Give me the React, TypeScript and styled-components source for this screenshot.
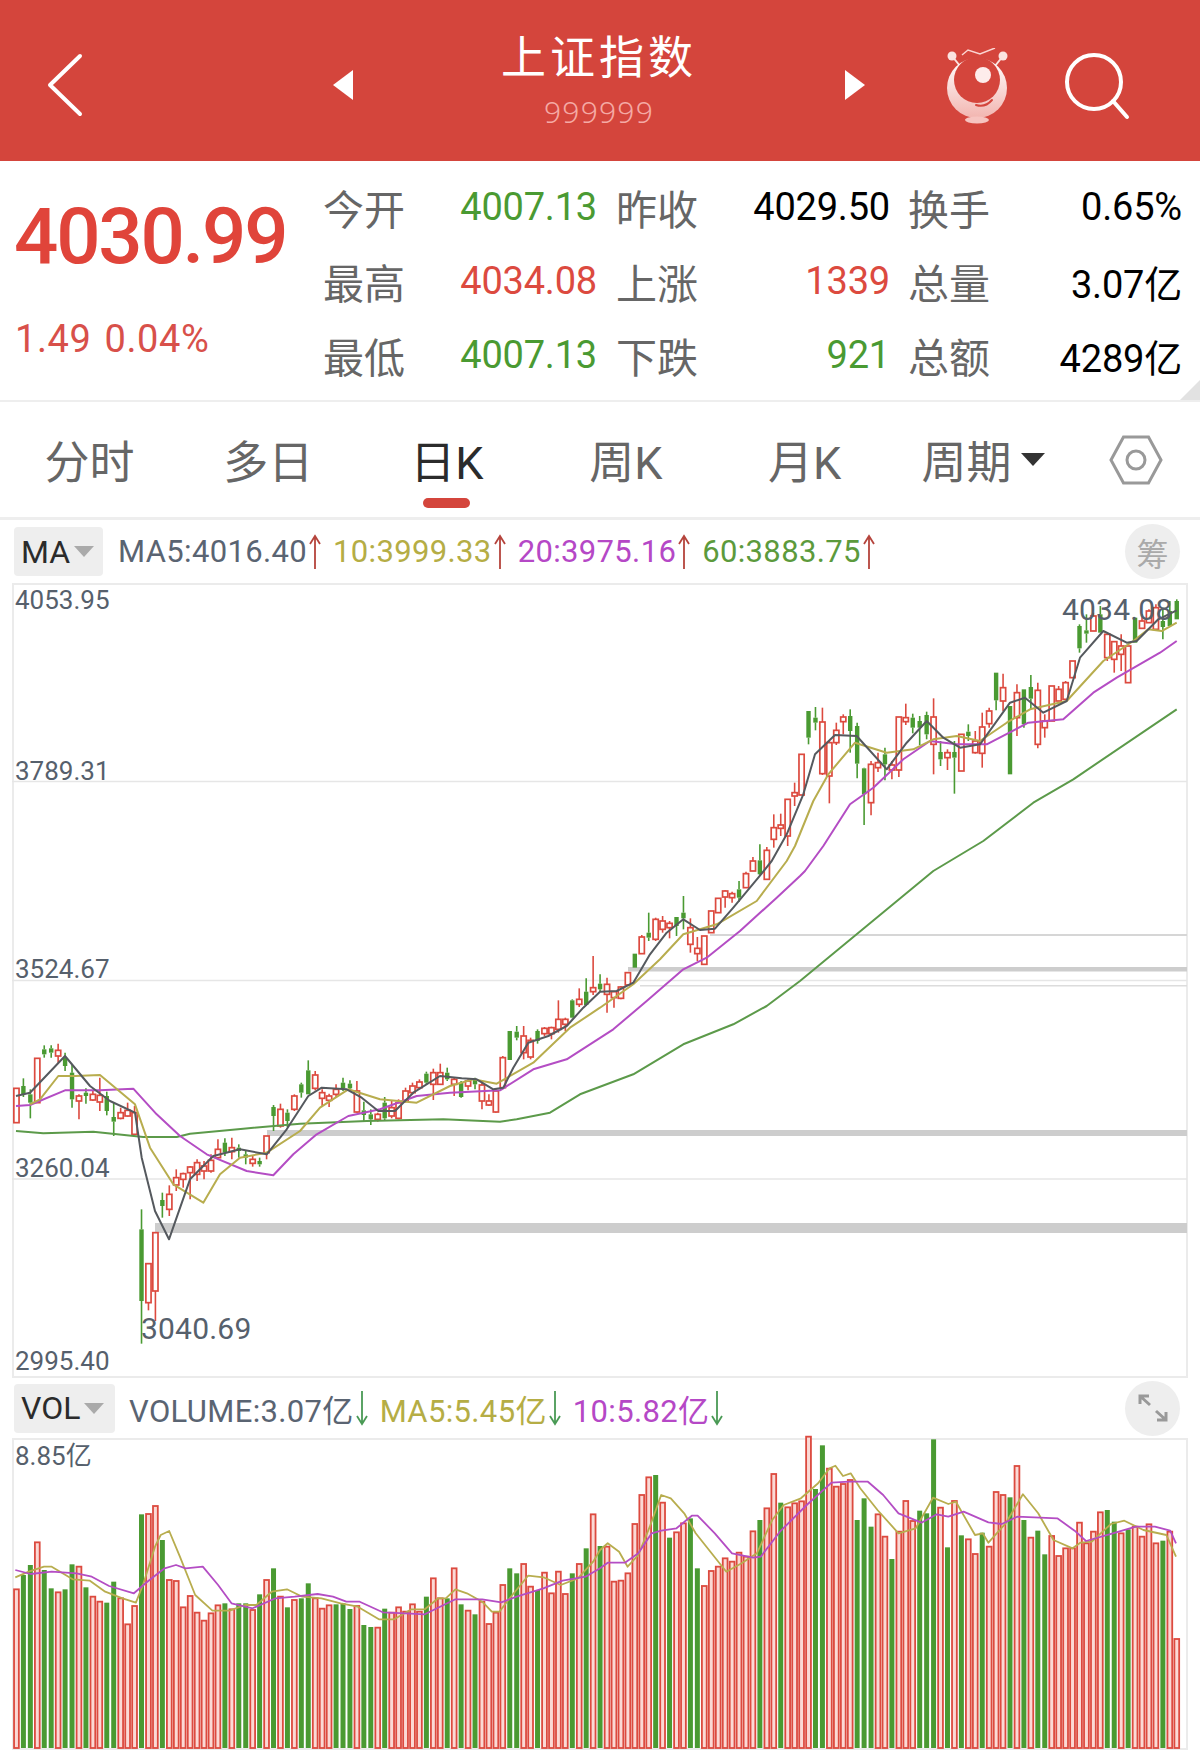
import React from "react";
import styled, { createGlobalStyle } from "styled-components";

const RED = "#d4453c";
const UP = "#dc4a3f";
const DOWN = "#4a9a32";
const SANS = `Roboto, "Noto Sans CJK SC", sans-serif`;

const GlobalStyle = createGlobalStyle`
  html, body { margin: 0; padding: 0; background: #fff; }
  body { font-family: ${SANS}; width: 1200px; }
`;

type Pt = [number, number];

// points read off the chart, given in crop pixels
const crop = (ox: number, oy: number, pts: Pt[], sx = 3): Pt[] =>
  pts.map(([x, y]) => [ox + x / sx, oy + y / 3] as Pt);
const toPath = (pts: Pt[]) => pts.map(([x, y]) => `${x.toFixed(1)},${y.toFixed(1)}`).join(" ");

const colors =
  "RGGRGGRGGRGRRGGRRRGRRGRRRRRRRRGRGGRGRGRGRGGRRRGGGRGGRGRRRRRGRRGRGRGRRRRGGRRGRRRRGRGRGRRRRRRRGRGRRGGRRRRRRRRGRRGRRRRGGRRRRGGGRRGRRRGGGRGRGRRGRRRGRGRGGRRRRRRRRGGRGRRRRGRRR".slice(0, 168);

const candleColors =
  "RGGRGGRGGRGRRGGRRRGRRGRRRRRRRRGRGGRGRGRGRGGRRRRGGRGGRGRRRRRGRRGRGRGRRRRGGRRGRRRRGRGRGRRRRGRGRRRGGRRRRRRRGRRGRRRRRRGGRRRRGGGRRGRRRGGGRGRGRGRRRGRGRGGRRRRRRGGRGRRRRGRRR";

type Candle = [number, number, number, number];

const candlesA: Candle[] = [
  [262,262,365,365],[232,255,280,288],[265,280,305,352],[172,172,305,305],[133,145,160,170],[133,142,155,170],
  [128,148,165,185],[155,170,195,210],[190,215,295,320],[280,285,300,355],[262,275,285,308],[270,280,297,300],
  [230,283,303,330],[272,285,330,343],[305,348,362,405],[320,335,352,355],[305,328,345,347],[315,335,400,400],
  [625,685,900,1028],[788,788,905,928],[695,695,870,960],[575,597,615,650],[553,580,625,645],[505,530,552,570],
  [515,518,535,560],[495,498,515,595],[475,485,520,540],[480,495,510,535],[460,478,510,515],[415,445,470,475],
  [412,425,455,465],[410,440,452,475],[430,440,450,470],[450,460,470,490],[465,475,487,497],[470,480,490,497],
  [405,405,455,475],[312,318,345,390],[308,325,375,380],[325,335,360,378],[280,285,325,330],[245,250,275,290],
  [178,208,280,280],[210,222,262,268],[265,275,292,318],[278,285,298,318],[250,265,280,290],[230,245,262,270],
  [238,248,262,270],[240,270,333,335],[302,328,342,360],[325,340,355,372],[335,340,355,362],[288,305,352,358],
  [300,320,345,352],[295,305,352,355],[260,270,300,305],[245,255,275,280],[235,243,260,265],[212,218,245,250],
  [203,215,250,297],[188,215,250,252],[200,215,235,240],[228,235,250,285],[240,245,288,290],[235,240,255,268],
  [230,235,250,265],[245,252,300,325],[280,300,312,315],[262,270,333,335],
];
const candlesB: Candle[] = [
  [585,590,680,680],[510,510,597,597],[495,512,530,538],[495,525,575,595],[530,538,588,595],[505,510,540,548],
  [498,502,518,525],[497,500,518,535],[418,475,505,515],[470,475,490,510],[415,418,470,472],[382,415,430,438],
  [352,392,432,435],[285,380,392,402],[340,368,385,390],[350,370,400,455],[392,392,410,440],[375,378,412,415],
  [335,335,372,375],[278,278,320,320],[222,228,278,278],[155,215,230,240],[170,175,235,240],[165,180,205,215],
  [180,187,200,232],[168,168,195,225],[105,155,172,205],[172,200,250,275],[228,262,278,300],[225,225,310,310],
  [150,150,215,215],[112,112,155,155],[88,90,108,140],[92,98,110,125],[60,85,110,122],[32,38,80,80],
];
const candlesC: Candle[] = [
  [858,870,900,900],[820,868,910,915],[828,838,925,925],[730,770,805,830],[728,762,772,795],[685,685,795,825],
  [635,665,675,705],[550,550,672,672],[420,420,500,520],[408,440,455,478],[410,453,608,612],[510,515,615,697],
  [455,478,515,522],[430,438,452,490],[415,435,480,545],[455,465,578,622],[590,592,670,762],[570,580,695,733],
  [545,575,590,603],[530,550,580,628],[570,582,597,625],[438,438,597,618],[398,440,452,462],[428,440,470,487],
  [435,450,470,522],[422,432,490,505],[382,438,520,610],[510,543,565,585],[535,545,560,597],[510,543,560,668],
  [490,490,600,600],[460,482,495,510],[480,510,545,548],[425,468,547,590],[410,420,458,470],[305,305,388,418],
  [308,350,390,420],[405,405,610,610],[340,365,440,495],[355,355,460,470],[312,348,383,415],[335,358,520,532],
  [430,450,470,500],[345,345,450,450],[345,355,390,390],[330,335,385,385],[270,270,320,320],[160,165,232,245],
  [130,178,188,215],[125,135,180,180],[105,130,185,185],[190,190,260,270],[210,212,265,305],[190,225,250,300],
  [225,225,335,335],[140,140,215,215],[130,150,172,172],[115,120,155,155],[100,110,175,175],[110,150,168,205],
  [90,120,165,165],[85,90,145,145],
];

const toPage = (oy: number, rows: Candle[]): Candle[] =>
  rows.map((r) => r.map((v) => oy + v / 3) as Candle);
const candles = [...toPage(1000, candlesA), ...toPage(860, candlesB), ...toPage(570, candlesC)];
const barX = (i: number) => 16.45 + 6.948 * i;

const ma5 = [
  ...crop(0, 1000, [[48,285],[90,275],[195,165],[270,255],[330,300],[405,335],[425,470],[465,630],[507,715],[570,535],[640,465],[720,445],[800,460],[860,385],[925,285],[965,260],[1040,265],[1085,290],[1135,330],[1185,330],[1240,275],[1320,225],[1385,232],[1430,235],[1480,265]]),
  ...crop(400, 860, [[310,680],[340,620],[385,545],[445,525],[500,495],[550,440],[600,392],[650,390],[700,365],[750,280],[800,215],[850,175],[900,207],[945,203],[1000,140],[1075,50],[1115,0]]),
  ...crop(700, 570, [[260,790],[310,670],[345,550],[405,492],[470,495],[560,595],[620,515],[680,450],[730,500],[780,530],[840,520],[930,395],[975,380],[1030,425],[1100,390],[1140,260],[1210,180],[1280,215],[1310,210],[1375,145],[1430,118]]),
];
const ma10 = [
  ...crop(0, 1000, [[90,310],[120,295],[175,225],[225,225],[300,222],[405,310],[450,440],[520,550],[610,605],[660,520],[720,470],[800,455],[900,390],[960,320],[1045,265],[1140,295],[1250,305],[1350,255],[1420,235],[1490,248]]),
  ...crop(400, 860, [[400,605],[510,500],[600,440],[700,370],[780,295],[850,220],[950,190],[1070,120],[1160,0]]),
  ...crop(700, 570, [[285,825],[340,690],[385,610],[465,515],[560,545],[640,535],[700,505],[770,495],[840,510],[920,455],[990,415],[1100,390],[1210,270],[1300,210],[1345,175],[1385,180],[1430,155]]),
];
const ma20 = [
  ...crop(0, 1000, [[48,315],[90,312],[195,268],[300,268],[400,263],[470,340],[540,405],[620,460],[740,510],[820,523],[880,460],[950,400],[1045,345],[1140,325],[1250,285],[1350,275],[1500,268]]),
  ...crop(400, 860, [[310,682],[400,625],[500,595],[640,505],[740,420],[850,325],[920,290],[1020,210],[1130,110],[1200,45]]),
  ...crop(700, 570, [[315,900],[370,825],[450,700],[520,650],[610,565],[690,510],[770,520],[860,520],[985,455],[1090,445],[1180,365],[1250,320],[1380,245],[1430,210]]),
];
const ma60 = [
  ...crop(0, 1000, [[48,390],[130,397],[280,392],[430,408],[530,408],[570,398],[730,383],[900,368],[1100,360],[1330,355],[1500,362]]),
  ...crop(400, 860, [[350,775],[450,755],[540,700],[700,640],[850,550],[1000,490],[1100,435],[1200,360]]),
  ...crop(700, 570, [[700,900],[850,810],[1000,695],[1120,625],[1430,415]]),
];

const volTops = [
  658,615,585,517,600,655,667,658,583,590,652,680,695,698,635,685,763,708,433,432,408,510,630,633,712,678,728,752,730,706,
  700,718,700,700,720,673,630,595,680,712,690,685,640,685,716,706,703,700,717,708,765,771,773,716,728,712,725,703,725,680,
  625,685,685,595,703,722,733,695,762,728,645,595,610,582,650,660,608,670,605,672,610,582,535,433,528,530,635,632,610,462,
  375,322,315,398,503,487,460,445,595,648,603,590,565,575,548,560,484,450,415,312,398,412,400,394,200,357,226,296,350,342,
  330,450,385,470,433,500,567,485,393,453,422,430,208,413,532,393,496,508,552,488,530,366,375,382,288,450,503,482,553,498,
  558,535,535,458,520,485,427,420,455,490,478,470,500,463,520,512,485,807,
];

const volMa5 = [
  ...crop(0, 1370, [[40,622],[75,605],[115,590],[135,590],[190,628],[235,632],[275,665],[320,685],[355,698],[375,640],[405,530],[420,495],[442,483],[470,560],[510,675],[555,722],[600,722],[640,705],[670,705],[710,665],[750,658],[790,680],[840,685],[890,700],[935,710],[990,748],[1030,748],[1075,718],[1110,718],[1145,685],[1165,685],[1190,658],[1220,670],[1260,695],[1285,725],[1305,725],[1335,680],[1380,617],[1420,622],[1465,645],[1510,625],[1550,575],[1568,540]], 2.613),
  ...crop(600, 1370, [[20,520],[50,545],[72,590],[100,555],[130,470],[160,375],[185,385],[220,430],[250,490],[330,605],[370,580],[410,550],[450,450],[480,405],[525,385],[570,340],[600,295],[615,287],[635,318],[655,310],[680,355],[725,420],[780,490],[825,475],[870,383],[910,402],[930,395],[980,495],[1000,490],[1015,518],[1060,460],[1105,373],[1145,430],[1185,510],[1235,535],[1255,518],[1285,515],[1335,462],[1370,452],[1420,480],[1480,495],[1505,560]], 2.613),
];
const volMa10 = [
  ...crop(0, 1370, [[40,600],[80,612],[135,605],[200,610],[240,620],[285,648],[350,670],[385,635],[430,595],[460,585],[485,595],[530,590],[570,645],[605,700],[660,715],[720,685],[770,680],[830,672],[870,680],[905,695],[940,695],[1000,727],[1060,730],[1110,733],[1190,688],[1260,688],[1310,697],[1350,680],[1420,655],[1470,632],[1530,620],[1568,595]], 2.613),
  ...crop(600, 1370, [[20,578],[65,578],[100,550],[135,490],[160,482],[200,475],[240,437],[255,437],[300,490],[345,550],[400,563],[420,560],[470,485],[540,405],[605,338],[650,335],[700,335],[740,375],[780,430],[840,458],[880,433],[910,440],[950,425],[1015,457],[1050,462],[1090,440],[1195,445],[1240,482],[1270,513],[1340,490],[1400,470],[1450,470],[1490,482],[1505,520]], 2.613),
];

const stats = [
  ["今开", "4007.13", DOWN, "昨收", "4029.50", "#000", "换手", "0.65%", "#000"],
  ["最高", "4034.08", UP, "上涨", "1339", UP, "总量", "3.07亿", "#000"],
  ["最低", "4007.13", DOWN, "下跌", "921", DOWN, "总额", "4289亿", "#000"],
];

const tabs = ["分时", "多日", "日K", "周K", "月K"];

const Page = styled.div`
  width: 1200px;
  height: 1755px;
  overflow: hidden;
  background: #fff;
`;

const Header = styled.header`
  height: 161px;
  background: ${RED};
  display: grid;
  grid-template-columns: 333px 20px 492px 20px 82px 61px 55px 70px;
  align-items: center;
  box-sizing: border-box;
`;

const BackSlot = styled.div`
  padding-left: 47px;
  display: flex;
  margin-top: 8px;
`;

const Arrow = styled.div<{ $dir: "left" | "right" }>`
  width: 0;
  height: 0;
  margin-top: 8px;
  border-top: 15px solid transparent;
  border-bottom: 15px solid transparent;
  ${(p) => (p.$dir === "left" ? "border-right: 20px solid #fff;" : "border-left: 20px solid #fff;")}
`;

const TitleBox = styled.div`
  display: flex;
  flex-direction: column;
  align-items: center;
`;

const Title = styled.div`
  color: #fff;
  font-family: "Noto Sans CJK SC", sans-serif;
  font-size: 45px;
  font-weight: 400;
  letter-spacing: 4px;
  line-height: 48px;
  margin-top: 0;
`;

const Code = styled.div`
  color: #f5aaa5;
  font-family: "Noto Sans", sans-serif;
  font-weight: 300;
  font-size: 30px;
  letter-spacing: 1.2px;
  line-height: 36px;
  margin-top: 15px;
`;

const LogoSlot = styled.div`
  display: flex;
  margin-top: 10px;
`;

const SearchSlot = styled.div`
  display: flex;
  grid-column: 8;
  margin-top: 10px;
`;

const StatsSection = styled.section`
  position: relative;
  height: 239px;
  display: flex;
  box-sizing: border-box;
`;

const PriceBlock = styled.div`
  width: 322px;
  box-sizing: border-box;
  padding-left: 14px;
  padding-top: 34px;
`;

const BigPrice = styled.div`
  color: #e0443a;
  font-size: 78px;
  font-weight: 500;
  line-height: 84px;
  letter-spacing: -2.2px;
`;

const Change = styled.div`
  color: #d8504a;
  font-size: 38px;
  line-height: 44px;
  margin-top: 38px;
  word-spacing: 3px;
  letter-spacing: 0.6px;
  padding-left: 1px;
`;

const StatGrid = styled.div`
  display: grid;
  grid-template-columns: 83px 192px 101px 192px 100px 192px;
  grid-auto-rows: 74px;
  align-items: center;
  padding-top: 9px;
`;

const StatLabel = styled.div`
  color: #666;
  font-size: 41px;
  text-align: right;
  white-space: nowrap;
`;

const StatValue = styled.div<{ $color: string }>`
  color: ${(p) => p.$color};
  font-size: 38px;
  text-align: right;
  white-space: nowrap;
  letter-spacing: -0.2px;
`;

const Corner = styled.div`
  position: absolute;
  right: 0;
  bottom: 0;
  width: 0;
  height: 0;
  border-left: 20px solid transparent;
  border-bottom: 20px solid #e2e2e2;
`;

const TabBar = styled.nav`
  height: 115px;
  border-top: 2px solid #eee;
  border-bottom: 3px solid #eee;
  display: grid;
  grid-template-columns: repeat(6, 178.8px) 1fr;
  align-items: center;
  box-sizing: content-box;
`;

const Tab = styled.div<{ $active?: boolean }>`
  position: relative;
  height: 115px;
  display: flex;
  align-items: center;
  justify-content: center;
  font-size: 45px;
  color: ${(p) => (p.$active ? "#2b2b2b" : "#666")};
  white-space: nowrap;

  ${(p) =>
    p.$active &&
    `&::after {
      content: "";
      position: absolute;
      left: 50%;
      bottom: 9px;
      width: 47px;
      height: 10px;
      margin-left: -24px;
      border-radius: 5px;
      background: ${RED};
    }`}
`;

const Caret = styled.span`
  width: 0;
  height: 0;
  margin-left: 10px;
  border-left: 12px solid transparent;
  border-right: 12px solid transparent;
  border-top: 13px solid #333;
`;

const SettingsSlot = styled.div`
  display: flex;
  justify-content: center;
`;

const IndicatorRow = styled.div<{ $height: number }>`
  height: ${(p) => p.$height}px;
  display: flex;
  align-items: center;
  padding: 0 20px 0 14px;
`;

const Selector = styled.div<{ $width: number }>`
  width: ${(p) => p.$width}px;
  height: 49px;
  flex: none;
  display: flex;
  align-items: center;
  gap: 4px;
  box-sizing: border-box;
  padding-left: 7px;
  background: #eee;
  border-radius: 4px;
  color: #2b2b2b;
  font-size: 32px;
`;

const SmallCaret = styled.span`
  width: 0;
  height: 0;
  border-left: 10px solid transparent;
  border-right: 10px solid transparent;
  border-top: 11px solid #aaa;
`;

const Readouts = styled.div<{ $left: number }>`
  display: flex;
  align-items: center;
  gap: 12px;
  margin-left: ${(p) => p.$left}px;
  flex: 1;
`;

const Readout = styled.span<{ $color: string }>`
  display: inline-flex;
  align-items: center;
  gap: 2px;
  color: ${(p) => p.$color};
  font-size: 31px;
  letter-spacing: 0.35px;
  white-space: nowrap;
`;

const RoundChip = styled.div`
  width: 55px;
  height: 55px;
  flex: none;
  border-radius: 50%;
  background: #eee;
  color: #aaa;
  font-size: 32px;
  display: flex;
  align-items: center;
  justify-content: center;
`;

const ChartPanel = styled.div<{ $height: number }>`
  position: relative;
  width: 1176px;
  height: ${(p) => p.$height}px;
  margin-left: 12px;
  box-sizing: border-box;
  border: 2px solid #ebebeb;
`;

const ChartSvg = styled.svg`
  position: absolute;
  left: -2px;
  top: -2px;
  display: block;
  overflow: visible;
`;

const AxisLabel = styled.span<{ $top?: number }>`
  position: absolute;
  left: 1px;
  top: ${(p) => p.$top ?? 0}px;
  color: #56606c;
  font-size: 26px;
  line-height: 30px;
  white-space: nowrap;
`;

const ExtremeLabel = styled.span<{ $x: number; $y: number }>`
  position: absolute;
  left: ${(p) => p.$x}px;
  top: ${(p) => p.$y}px;
  color: #56606c;
  font-size: 30px;
  line-height: 34px;
  letter-spacing: 0.2px;
  white-space: nowrap;
`;

const BackIcon = () => (
  <svg width="36" height="64" viewBox="0 0 36 64">
    <polyline points="33,3 3,32 33,61" fill="none" stroke="#fff" strokeWidth="4" strokeLinecap="round" strokeLinejoin="round" />
  </svg>
);

const SearchIcon = () => (
  <svg width="70" height="70" viewBox="0 0 70 70">
    <circle cx="31" cy="31" r="27" fill="none" stroke="#fff" strokeWidth="4" />
    <line x1="50" y1="50" x2="64" y2="66" stroke="#fff" strokeWidth="4" strokeLinecap="round" />
  </svg>
);

const LogoIcon = () => (
  <svg width="61" height="76" viewBox="947 48 61 76">
    <defs>
      <linearGradient id="logoFill" x1="0" y1="0" x2="0" y2="1">
        <stop offset="0" stopColor="#fff" />
        <stop offset="1" stopColor="#f2b5b0" />
      </linearGradient>
    </defs>
    <line x1="952" y1="56" x2="960" y2="66" stroke="#fbe3e0" strokeWidth="2" />
    <line x1="1003" y1="56" x2="995" y2="66" stroke="#fbe3e0" strokeWidth="2" />
    <circle cx="952" cy="56" r="4.5" fill="#fbe3e0" />
    <circle cx="1003" cy="56" r="4.5" fill="#fbe3e0" />
    <polyline points="962,55 968,50 980,54 995,48" fill="none" stroke="#fbd5d2" strokeWidth="1.5" />
    <circle cx="977" cy="88" r="30" fill="url(#logoFill)" />
    <circle cx="977" cy="80" r="23" fill={RED} />
    <circle cx="983" cy="75" r="8" fill="#fdeceb" />
    <path d="M976 105 Q985 108 992 100" fill="none" stroke={RED} strokeWidth="2" strokeLinecap="round" />
    <ellipse cx="977" cy="120" rx="12" ry="3.5" fill="#f6c4c0" />
  </svg>
);

const HexIcon = () => (
  <svg width="54" height="50" viewBox="0 0 54 50">
    <polygon points="14.5,2 39.5,2 52,25 39.5,48 14.5,48 2,25" fill="none" stroke="#999" strokeWidth="3" />
    <circle cx="27" cy="25" r="9" fill="none" stroke="#999" strokeWidth="3" />
  </svg>
);

const TrendArrow = ({ down }: { down?: boolean }) => (
  <svg width="12" height="36" viewBox="0 0 12 36">
    {down ? (
      <path d="M6 1V34M1 26L6 34L11 26" fill="none" stroke="#4a9a55" strokeWidth="1.8" />
    ) : (
      <path d="M6 35V2M1 10L6 2L11 10" fill="none" stroke="#b5443c" strokeWidth="1.8" />
    )}
  </svg>
);

const ExpandIcon = () => (
  <svg width="32" height="30" viewBox="0 0 32 30">
    <path d="M3 11V3H12M3 3L13 12" fill="none" stroke="#999" strokeWidth="3" />
    <path d="M29 19V27H20M29 27L19 18" fill="none" stroke="#999" strokeWidth="3" />
  </svg>
);

const Candles = () => (
  <>
    {candles.map(([hi, top, bot, lo], i) => {
      const x = barX(i);
      const up = candleColors[i] === "R";
      const c = up ? UP : DOWN;
      return (
        <g key={i}>
          <line x1={x} x2={x} y1={hi} y2={top} stroke={c} strokeWidth="1.6" />
          <line x1={x} x2={x} y1={bot} y2={lo} stroke={c} strokeWidth="1.6" />
          {up ? (
            <rect x={x - 2.6} y={top} width={5.2} height={Math.max(bot - top, 2)} fill="#fff" stroke={c} strokeWidth="1.7" />
          ) : (
            <rect x={x - 2.2} y={top} width={4.4} height={Math.max(bot - top, 2)} fill={c} />
          )}
        </g>
      );
    })}
  </>
);

const PriceChart = () => (
  <ChartPanel $height={795}>
    <ChartSvg width="1176" height="795" viewBox="12 582 1176 795">
      <g stroke="#e6e6e6" strokeWidth="1.5">
        <line x1="12" x2="1187" y1="780.5" y2="780.5" />
        <line x1="12" x2="1187" y1="979.5" y2="979.5" />
        <line x1="12" x2="1187" y1="1178" y2="1178" />
      </g>
      <g fill="#cdcdcd">
        <rect x="155" y="1222" width="1032" height="10" />
        <rect x="267" y="1129" width="920" height="6" />
        <rect x="628" y="966" width="559" height="4.5" />
        <rect x="710" y="933" width="477" height="2" fill="#d6d6d6" />
        <rect x="640" y="984" width="547" height="1.5" fill="#dcdcdc" />
      </g>
      <Candles />
      <g fill="none" strokeWidth="2" strokeLinejoin="round">
        <polyline points={toPath(ma60)} stroke="#5c9a4a" />
        <polyline points={toPath(ma20)} stroke="#b44dc4" />
        <polyline points={toPath(ma10)} stroke="#b8ad4e" />
        <polyline points={toPath(ma5)} stroke="#55595e" />
      </g>
    </ChartSvg>
    <AxisLabel $top={0}>4053.95</AxisLabel>
    <AxisLabel $top={171}>3789.31</AxisLabel>
    <AxisLabel $top={369}>3524.67</AxisLabel>
    <AxisLabel $top={568}>3260.04</AxisLabel>
    <AxisLabel $top={761}>2995.40</AxisLabel>
    <ExtremeLabel $x={1048} $y={8}>4034.08</ExtremeLabel>
    <ExtremeLabel $x={127} $y={727}>3040.69</ExtremeLabel>
  </ChartPanel>
);

const VolumeChart = () => (
  <ChartPanel $height={312}>
    <ChartSvg width="1176" height="312" viewBox="12 1438 1176 312">
      {volTops.map((t, i) => {
        const x = barX(i);
        const top = 1370 + t / 3;
        return colors[i] === "R" ? (
          <rect key={i} x={x - 2.4} y={top} width={4.8} height={1748 - top} fill="#fbd9d5" stroke={UP} strokeWidth="1.8" />
        ) : (
          <rect key={i} x={x - 2.5} y={top} width={5} height={1748 - top} fill={DOWN} />
        );
      })}
      <g fill="none" strokeWidth="1.8" strokeLinejoin="round">
        <polyline points={toPath(volMa5)} stroke="#b8ad4e" />
        <polyline points={toPath(volMa10)} stroke="#b44dc4" />
      </g>
    </ChartSvg>
    <AxisLabel $top={1}>8.85亿</AxisLabel>
  </ChartPanel>
);

export default function App() {
  return (
    <Page>
      <GlobalStyle />
      <Header>
        <BackSlot>
          <BackIcon />
        </BackSlot>
        <Arrow $dir="left" />
        <TitleBox>
          <Title>上证指数</Title>
          <Code>999999</Code>
        </TitleBox>
        <Arrow $dir="right" />
        <span />
        <LogoSlot>
          <LogoIcon />
        </LogoSlot>
        <SearchSlot>
          <SearchIcon />
        </SearchSlot>
      </Header>

      <StatsSection>
        <PriceBlock>
          <BigPrice>4030.99</BigPrice>
          <Change>1.49 0.04%</Change>
        </PriceBlock>
        <StatGrid>
          {stats.map((row) => (
            <React.Fragment key={row[0]}>
              <StatLabel>{row[0]}</StatLabel>
              <StatValue $color={row[2]}>{row[1]}</StatValue>
              <StatLabel>{row[3]}</StatLabel>
              <StatValue $color={row[5]}>{row[4]}</StatValue>
              <StatLabel>{row[6]}</StatLabel>
              <StatValue $color={row[8]}>{row[7]}</StatValue>
            </React.Fragment>
          ))}
        </StatGrid>
        <Corner />
      </StatsSection>

      <TabBar>
        {tabs.map((t) => (
          <Tab key={t} $active={t === "日K"}>
            {t}
          </Tab>
        ))}
        <Tab>
          周期
          <Caret />
        </Tab>
        <SettingsSlot>
          <HexIcon />
        </SettingsSlot>
      </TabBar>

      <IndicatorRow $height={63}>
        <Selector $width={89}>
          MA
          <SmallCaret />
        </Selector>
        <Readouts $left={15}>
          <Readout $color="#5a6472">MA5:4016.40<TrendArrow /></Readout>
          <Readout $color="#b5ad45">10:3999.33<TrendArrow /></Readout>
          <Readout $color="#b548c6">20:3975.16<TrendArrow /></Readout>
          <Readout $color="#5c9a3c">60:3883.75<TrendArrow /></Readout>
        </Readouts>
        <RoundChip>筹</RoundChip>
      </IndicatorRow>
      <PriceChart />

      <IndicatorRow $height={60}>
        <Selector $width={101}>
          VOL
          <SmallCaret />
        </Selector>
        <Readouts $left={14}>
          <Readout $color="#5a6472">VOLUME:3.07亿<TrendArrow down /></Readout>
          <Readout $color="#b5ad45">MA5:5.45亿<TrendArrow down /></Readout>
          <Readout $color="#b548c6">10:5.82亿<TrendArrow down /></Readout>
        </Readouts>
        <RoundChip>
          <ExpandIcon />
        </RoundChip>
      </IndicatorRow>
      <VolumeChart />
    </Page>
  );
}
